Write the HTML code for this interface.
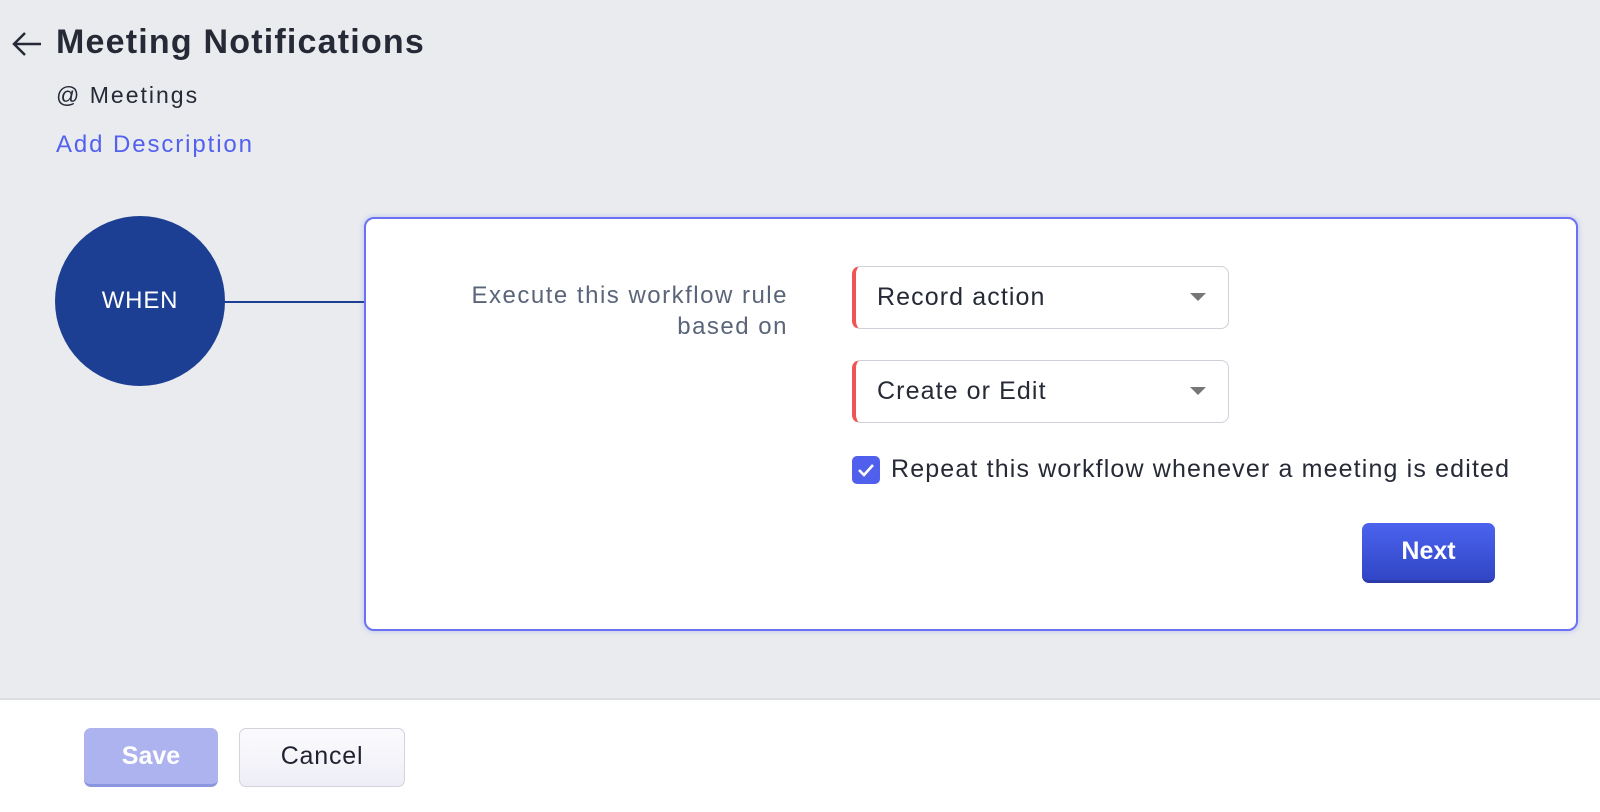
<!DOCTYPE html>
<html><head><meta charset="utf-8"><style>
*{box-sizing:border-box;margin:0;padding:0}
body{width:1600px;height:812px;overflow:hidden;background:#e9ebee;font-family:"Liberation Sans",sans-serif;position:relative}
.abs{position:absolute}
.title{left:56px;top:23px;font-size:34px;font-weight:bold;color:#262a36;letter-spacing:1.2px}
.sub{left:56px;top:82px;font-size:23px;color:#262a36;letter-spacing:2px}
.desc{left:56px;top:131px;font-size:24px;color:#5261ee;letter-spacing:1.9px}
.circle{left:55px;top:216px;width:170px;height:170px;border-radius:50%;background:#1d3f93;color:#fff;font-size:24px;display:flex;align-items:center;justify-content:center;letter-spacing:0.8px}
.line{left:224px;top:301px;width:142px;height:2px;background:#1d3f93}
.card{left:364px;top:217px;width:1214px;height:414px;background:#fff;border:2px solid #6b72f2;border-radius:10px;box-shadow:0 0 6px rgba(100,110,240,.35)}
.lbl{right:812px;top:280px;text-align:right;font-size:24px;color:#5b6579;line-height:31px;letter-spacing:1.5px}
.dd{left:852px;width:377px;height:63px;border:1.5px solid #cfd0d8;border-left:4px solid #f05454;border-radius:8px;background:#fff;font-size:25px;color:#262a36;padding-left:21px;line-height:60px;letter-spacing:1.1px}
.dd:after{content:"";position:absolute;right:22px;top:26px;border-left:8px solid transparent;border-right:8px solid transparent;border-top:8px solid #777}
.cb{left:852px;top:456px;width:28px;height:28px;border-radius:5px;background:#5060ec}
.cbt{left:891px;top:455px;font-size:25px;color:#262a36;letter-spacing:1.15px}
.next{left:1362px;top:523px;width:133px;height:60px;border-radius:7px;background:linear-gradient(#4b63ee,#3146c6);border-bottom:3px solid #2b3ba8;color:#fff;font-size:25px;font-weight:bold;text-align:center;line-height:56px}
.foot{left:0;top:698px;width:1600px;height:114px;background:#fff;border-top:2px solid #dcdde3}
.save{left:84px;top:728px;width:134px;height:59px;border-radius:7px;background:#adb3ee;border-bottom:3px solid #8c95e0;color:#fff;font-size:25px;font-weight:bold;text-align:center;line-height:56px}
.cancel{left:239px;top:728px;width:166px;height:59px;border-radius:7px;background:linear-gradient(#fbfbfe,#eeeef6);border:1.5px solid #d3d3dc;color:#1f2330;font-size:25px;text-align:center;line-height:55px;letter-spacing:0.8px}
</style></head><body>
<svg class="abs" style="left:10px;top:30px" width="34" height="28" viewBox="0 0 34 28"><path d="M31 14H4M15 3L4 14l11 11" fill="none" stroke="#262a36" stroke-width="2.5"/></svg>
<div class="abs title">Meeting Notifications</div>
<div class="abs sub">@ Meetings</div>
<div class="abs desc">Add Description</div>
<div class="abs line"></div>
<div class="abs circle">WHEN</div>
<div class="abs card"></div>
<div class="abs lbl">Execute this workflow rule<br>based on</div>
<div class="abs dd" style="top:266px">Record action</div>
<div class="abs dd" style="top:360px">Create or Edit</div>
<div class="abs cb"><svg width="28" height="28" viewBox="0 0 28 28"><path d="M7 14l5 5 9-10" fill="none" stroke="#fff" stroke-width="2.6"/></svg></div>
<div class="abs cbt">Repeat this workflow whenever a meeting is edited</div>
<div class="abs next">Next</div>
<div class="abs foot"></div>
<div class="abs save">Save</div>
<div class="abs cancel">Cancel</div>
</body></html>
